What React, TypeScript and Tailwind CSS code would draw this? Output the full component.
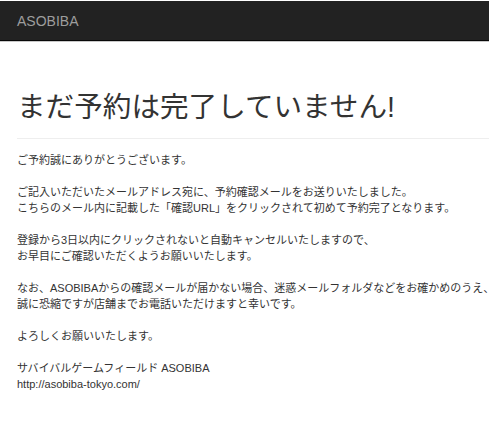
export default function App() {
  const font = { fontFamily: '"Liberation Sans", "Noto Sans CJK JP", sans-serif' };
  return (
    <div className="w-full min-h-[436px] overflow-hidden bg-white pt-px" style={font}>
      {/* navbar */}
      <div className="h-[40px] bg-[#222222] border-b border-[#080808] shadow-[0_1px_0_#c8c8c8]">
        <span className="block px-[17px] text-[14px] leading-[40px] text-[#9d9d9d]">ASOBIBA</span>
      </div>

      <div className="w-[700px] pl-[17px] text-[#333333]">
        <div className="mt-[51px] pb-[15px] border-b border-[#eeeeee]">
          <h1 className="text-[28.6px] leading-[31px] font-normal">まだ予約は完了していません!</h1>
        </div>

        <div className="mt-[13px] text-[11px] leading-[16px]">
          ご予約誠にありがとうございます。
          <br />
          <br />
          ご記入いただいたメールアドレス宛に、予約確認メールをお送りいたしました。
          <br />
          こちらのメール内に記載した「確認URL」をクリックされて初めて予約完了となります。
          <br />
          <br />
          登録から3日以内にクリックされないと自動キャンセルいたしますので、
          <br />
          お早目にご確認いただくようお願いいたします。
          <br />
          <br />
          なお、ASOBIBAからの確認メールが届かない場合、迷惑メールフォルダなどをお確かめのうえ、
          <br />
          誠に恐縮ですが店舗までお電話いただけますと幸いです。
          <br />
          <br />
          よろしくお願いいたします。
          <br />
          <br />
          サバイバルゲームフィールド ASOBIBA
          <br />
          http://asobiba-tokyo.com/
        </div>
      </div>
    </div>
  );
}
